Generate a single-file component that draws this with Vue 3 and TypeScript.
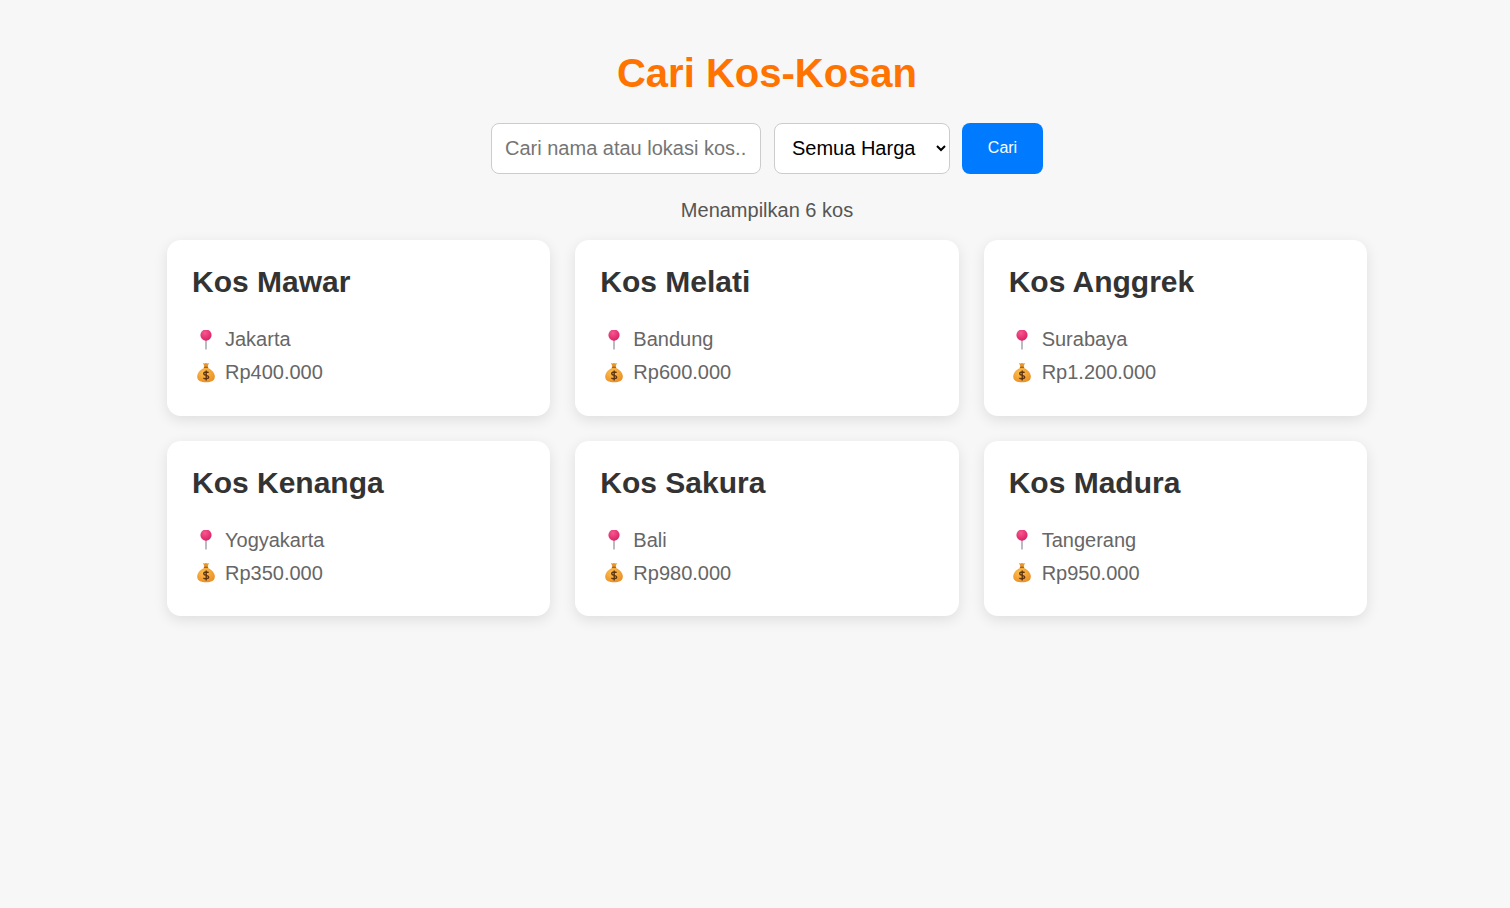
<script setup lang="ts">
interface Kos {
  nama: string;
  lokasi: string;
  harga: string;
}

const daftarKos: Kos[] = [
  { nama: "Kos Mawar", lokasi: "Jakarta", harga: "Rp400.000" },
  { nama: "Kos Melati", lokasi: "Bandung", harga: "Rp600.000" },
  { nama: "Kos Anggrek", lokasi: "Surabaya", harga: "Rp1.200.000" },
  { nama: "Kos Kenanga", lokasi: "Yogyakarta", harga: "Rp350.000" },
  { nama: "Kos Sakura", lokasi: "Bali", harga: "Rp980.000" },
  { nama: "Kos Madura", lokasi: "Tangerang", harga: "Rp950.000" },
];
</script>

<template>
  <div class="page">
    <div class="container">
      <h1 class="title">Cari Kos-Kosan</h1>

      <div class="search-bar">
        <input class="search-input" type="text" placeholder="Cari nama atau lokasi kos..." />
        <select class="price-select">
          <option>Semua Harga</option>
        </select>
        <button class="search-btn">Cari</button>
      </div>

      <p class="result-count">Menampilkan {{ daftarKos.length }} kos</p>

      <div class="kos-grid">
        <div v-for="(kos, i) in daftarKos" :key="kos.nama" class="kos-card">
          <h2 class="kos-name">{{ kos.nama }}</h2>
          <div class="kos-row">
            <svg class="kos-icon" viewBox="0 0.5 20 20">
              <defs>
                <radialGradient :id="`pin-${i}`" cx="0.4" cy="0.3" r="0.75">
                  <stop offset="0" stop-color="#f8568f" />
                  <stop offset="1" stop-color="#d81f63" />
                </radialGradient>
              </defs>
              <rect x="9.200" y="9" width="1.600" height="11" fill="#a9adb5" />
              <circle cx="10" cy="5.600" r="5.600" :fill="`url(#pin-${i})`" />
            </svg>
            <span>{{ kos.lokasi }}</span>
          </div>
          <div class="kos-row">
            <svg class="kos-icon" viewBox="0 0.5 20 20">
              <defs>
                <radialGradient :id="`bag-${i}`" cx="0.4" cy="0.35" r="0.75">
                  <stop offset="0" stop-color="#fdc04f" />
                  <stop offset="1" stop-color="#e98a22" />
                </radialGradient>
              </defs>
              <path d="M7 0.500c1 .5 2 .5 3 0 1 .5 2 .5 3 0l-1.600 4H8.600z" fill="#e8962c" />
              <path d="M8.400 5.200C4.800 6.800 1.200 10 1.200 14c0 4.200 3.700 5.800 8.800 5.800s8.800-1.600 8.800-5.800c0-4-3.600-7.200-7.200-8.800z" :fill="`url(#bag-${i})`" />
              <rect x="7.800" y="4.100" width="4.400" height="1.500" rx="0.600" fill="#a9651a" />
              <path d="M12.600 10.200c-.7-1-4.900-1.200-4.900 1 0 2.300 5 1.100 5 3.400 0 2.100-4.400 1.900-5.300.7M10.200 8.100v9.800" fill="none" stroke="#5f3510" stroke-width="1.400" />
            </svg>
            <span>{{ kos.harga }}</span>
          </div>
        </div>
      </div>
    </div>
  </div>
</template>

<style scoped>
.page {
  padding: 20px 0 40px 24px;
  font-family: "Liberation Sans", Arial, sans-serif;
}

.container {
  max-width: 1200px;
  margin: 0 auto;
}

.title {
  margin: 30px 0 27px;
  text-align: center;
  font-size: 40px;
  line-height: 46px;
  font-weight: 700;
  color: #ff7300;
}

.search-bar {
  display: flex;
  justify-content: center;
  gap: 12px;
  margin-bottom: 25px;
}

.search-input,
.price-select {
  box-sizing: border-box;
  height: 51px;
  padding: 12px 13px;
  font-size: 20px;
  font-family: "Liberation Sans", Arial, sans-serif;
  background: #fff;
  border: 1px solid #ccc;
  border-radius: 8px;
}

.search-input {
  width: 270px;
  margin-right: 1px;
}

.price-select {
  width: 176px;
  padding-top: 11px;
  padding-bottom: 13px;
  color: #000;
}

.search-btn {
  width: 81px;
  height: 51px;
  padding-bottom: 2px;
  border: none;
  border-radius: 8px;
  background: #007bff;
  color: #fff;
  font-size: 16px;
  font-family: "Liberation Sans", Arial, sans-serif;
}

.result-count {
  margin: 0 0 18px;
  text-align: center;
  font-size: 20px;
  line-height: 23px;
  color: #555;
}

.kos-grid {
  display: grid;
  grid-template-columns: repeat(3, 1fr);
  gap: 25px;
}

.kos-card {
  padding: 25px 25px 26.5px;
  background: #fff;
  border-radius: 14px;
  box-shadow: 0 4px 14px rgba(0, 0, 0, 0.1);
}

.kos-name {
  margin: 0 0 24px;
  font-size: 30px;
  line-height: 34px;
  font-weight: 700;
  color: #333;
}

.kos-row {
  display: flex;
  align-items: center;
  gap: 9.5px;
  padding-left: 3.5px;
  font-size: 20px;
  line-height: 33px;
  color: #666;
}

.kos-icon {
  width: 20px;
  height: 20px;
  flex: none;
}
</style>

<style>
html,
body {
  margin: 0;
  background: #f7f7f7;
}
</style>
